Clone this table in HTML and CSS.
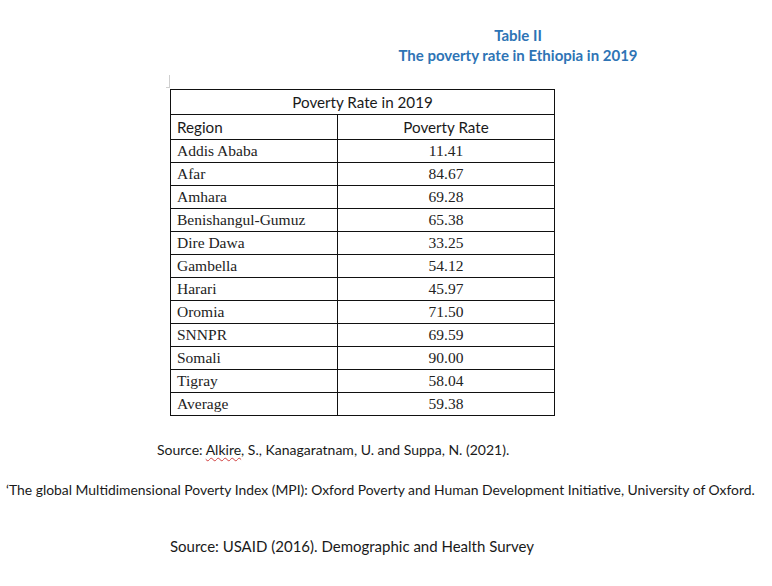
FILE: index.html
```html
<!DOCTYPE html>
<html>
<head>
<meta charset="utf-8">
<link rel="stylesheet" href="styles.css">
</head>
<body>
<div class="page">
  <div class="title">
    <div>Table II</div>
    <div>The poverty rate in Ethiopia in 2019</div>
  </div>
  <div class="table-wrap">
    <span class="corner"></span>
    <table class="data">
      <colgroup><col class="c1"><col class="c2"></colgroup>
      <tr class="h1"><td colspan="2" class="cap">Poverty Rate in 2019</td></tr>
      <tr class="h2"><td class="sans left">Region</td><td class="sans num">Poverty Rate</td></tr>
      <tr><td class="left">Addis Ababa</td><td class="num">11.41</td></tr>
      <tr><td class="left">Afar</td><td class="num">84.67</td></tr>
      <tr><td class="left">Amhara</td><td class="num">69.28</td></tr>
      <tr><td class="left">Benishangul-Gumuz</td><td class="num">65.38</td></tr>
      <tr><td class="left">Dire Dawa</td><td class="num">33.25</td></tr>
      <tr><td class="left">Gambella</td><td class="num">54.12</td></tr>
      <tr class="dashed"><td class="left">Harari</td><td class="num">45.97</td></tr>
      <tr><td class="left">Oromia</td><td class="num">71.50</td></tr>
      <tr><td class="left">SNNPR</td><td class="num">69.59</td></tr>
      <tr><td class="left">Somali</td><td class="num">90.00</td></tr>
      <tr><td class="left">Tigray</td><td class="num">58.04</td></tr>
      <tr><td class="left">Average</td><td class="num">59.38</td></tr>
    </table>
  </div>
  <p class="src src1">Source: <span class="squiggle">Alkire</span>, S., Kanagaratnam, U. and Suppa, N. (2021).</p>
  <p class="src src2">‘The global Multidimensional Poverty Index (MPI): Oxford Poverty and Human Development Initiative, University of Oxford.</p>
  <p class="src src3">Source: USAID (2016). Demographic and Health Survey</p>
</div>
</body>
</html>
```
FILE: styles.css
```css
html, body {
  margin: 0;
  padding: 0;
  background: #ffffff;
}
.page {
  width: 772px;
  height: 586px;
  overflow: hidden;
  font-family: Lato, "Liberation Sans", sans-serif;
  color: #1a1a1a;
}
.title {
  width: 300px;
  margin-left: 368px;
  padding-top: 25px;
  text-align: center;
  color: #2e74b5;
  font-weight: bold;
  font-size: 15px;
  line-height: 20px;
}
.table-wrap {
  position: relative;
  margin-left: 170px;
  margin-top: 24px;
  width: 384px;
}
.corner {
  position: absolute;
  left: -4px;
  top: -14px;
  width: 3px;
  height: 12px;
  border-right: 1px solid #cfcfcf;
  border-bottom: 1px solid #cfcfcf;
}
.data {
  border-collapse: collapse;
  width: 384px;
  table-layout: fixed;
}
.data col.c1 { width: 167px; }
.data col.c2 { width: 217px; }
.data td {
  border: 1px solid #111;
  height: 22px;
  padding: 0 6px;
  font-family: "Liberation Serif", "DejaVu Serif", serif;
  font-size: 15.5px;
  color: #222;
  line-height: 20px;
  vertical-align: middle;
  white-space: nowrap;
}
.data td.num { text-align: center; }
.data tr.h1 td, .data tr.h2 td { height: 24px; }
.data td.cap, .data td.sans {
  font-family: Lato, "Liberation Sans", sans-serif;
  font-size: 15.2px;
  color: #1a1a1a;
}
.data td.cap { text-align: center; }
.data tr.dashed td { border-bottom: 1px dashed #aaaaaa; }
.src {
  margin: 0;
  font-size: 14px;
  line-height: 18px;
  white-space: nowrap;
}
.src1 { padding-left: 157px; margin-top: 25px; }
.src2 { padding-left: 6px; margin-top: 22px; font-size: 13.9px; }
.src3 { padding-left: 170px; margin-top: 38px; font-size: 15px; }
.squiggle {
  text-decoration: underline wavy #d04040;
  text-decoration-thickness: 1px;
  text-underline-offset: 2px;
}
```
